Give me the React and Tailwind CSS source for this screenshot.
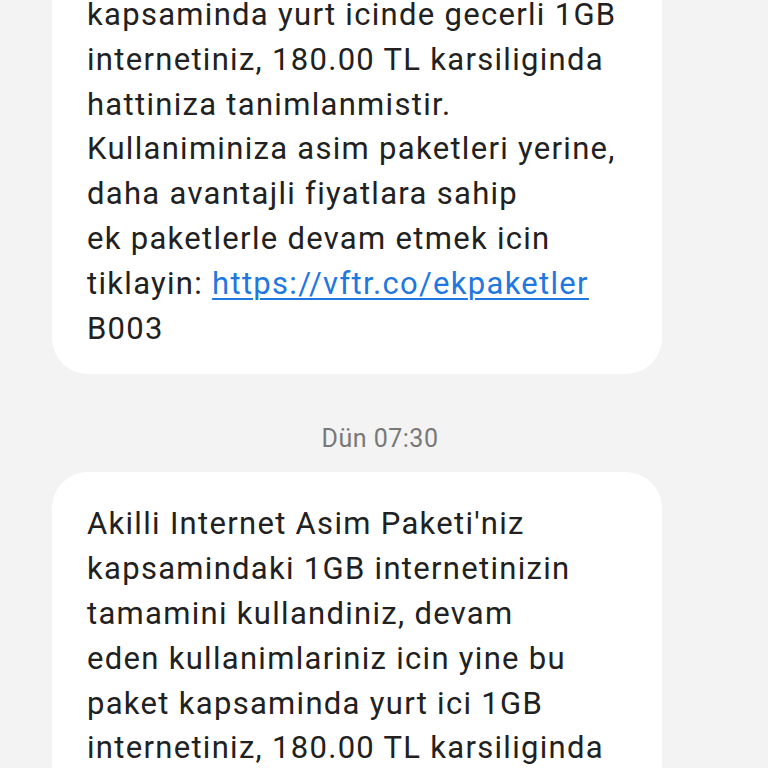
import React from 'react';

const first = [
  'kapsaminda yurt icinde gecerli 1GB',
  'internetiniz, 180.00 TL karsiliginda',
  'hattiniza tanimlanmistir.',
  'Kullaniminiza asim paketleri yerine,',
  'daha avantajli fiyatlara sahip',
  'ek paketlerle devam etmek icin',
];

const second = [
  "Akilli Internet Asim Paketi'niz",
  'kapsamindaki 1GB internetinizin',
  'tamamini kullandiniz, devam',
  'eden kullanimlariniz icin yine bu',
  'paket kapsaminda yurt ici 1GB',
  'internetiniz, 180.00 TL karsiliginda',
  'hattiniza tanimlanmistir.',
];

function Bubble({ children, className = '' }) {
  return (
    <div
      className={`ml-[52px] w-[610px] rounded-[36px] bg-white pl-[35px] pr-4 text-[31px] leading-[44.8px] tracking-[1.3px] text-[#212121] ${className}`}
    >
      {children}
    </div>
  );
}

export default function App() {
  return (
    <div
      className="h-[768px] overflow-hidden bg-[#f3f3f3]"
      style={{ fontFamily: 'Roboto, "Noto Sans", sans-serif' }}
    >
      <Bubble className="-mt-[33px] pt-[26px] pb-[23px]">
        {first.map(l => (
          <div key={l} className="whitespace-nowrap">{l}</div>
        ))}
        <div className="whitespace-nowrap">
          tiklayin:{' '}
          <span className="text-[#1f78e0] underline decoration-[2px] underline-offset-[4px]">
            https://vftr.co/ekpaketler
          </span>
        </div>
        <div>B003</div>
      </Bubble>

      <div className="mt-[50px] mb-[18px] pr-[8px] text-center text-[25px] leading-[30px] tracking-[0.5px] text-[#787878]">
        Dün 07:30
      </div>

      <Bubble className="pt-[30px] pb-6">
        {second.map(l => (
          <div key={l} className="whitespace-nowrap">{l}</div>
        ))}
      </Bubble>
    </div>
  );
}
